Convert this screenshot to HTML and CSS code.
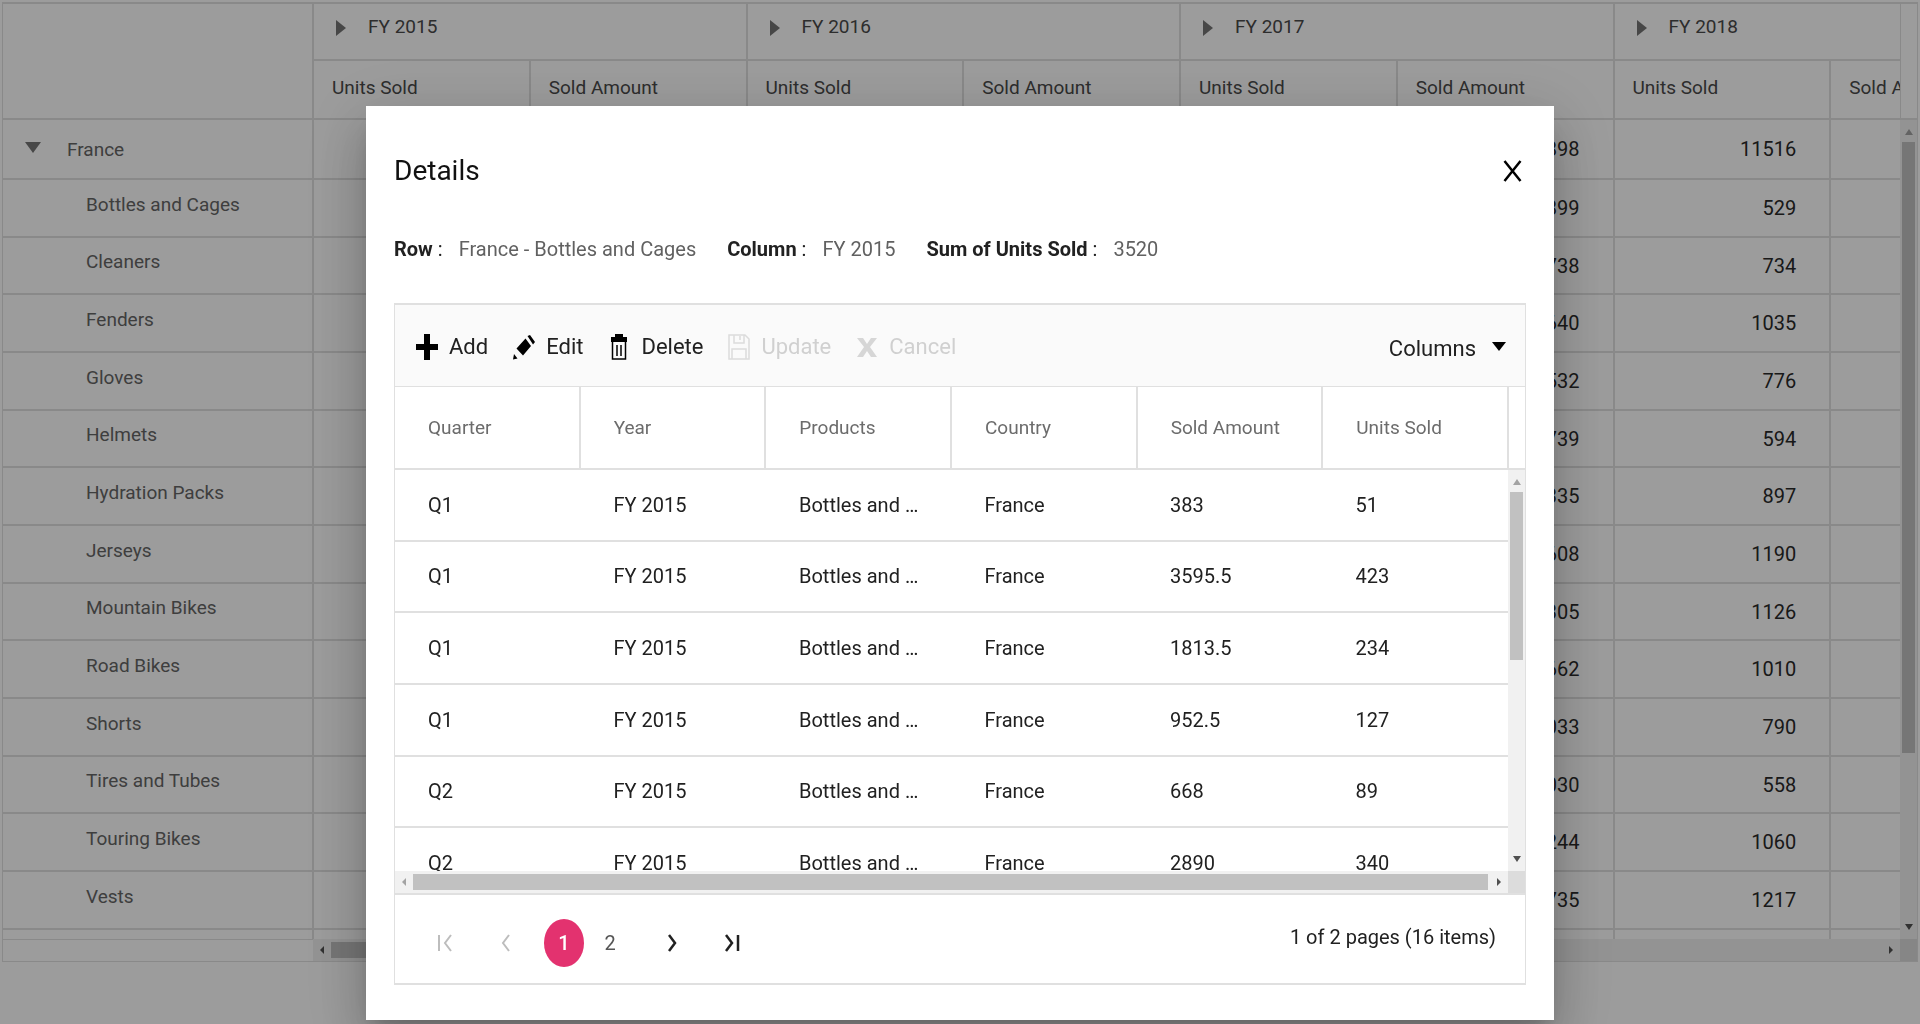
FILE: index.html
```
<!DOCTYPE html>
<html lang="en">
<head>
<meta charset="utf-8">
<title>Details</title>
<link rel="stylesheet" href="styles.css">
</head>
<body>
<main class="pivot">
  <div class="pivot-view">
    <table class="pivot-table">
      <colgroup><col class="col-label"><col><col><col><col><col><col><col><col></colgroup>
      <thead>
        <tr class="years">
          <td rowspan="2"></td>
          <th colspan="2"><span class="caret-right"></span>FY 2015</th>
          <th colspan="2"><span class="caret-right"></span>FY 2016</th>
          <th colspan="2"><span class="caret-right"></span>FY 2017</th>
          <th colspan="2"><span class="caret-right"></span>FY 2018</th>
        </tr>
        <tr class="measures">
          <th>Units Sold</th><th>Sold Amount</th><th>Units Sold</th><th>Sold Amount</th><th>Units Sold</th><th>Sold Amount</th><th>Units Sold</th><th>Sold Amount</th>
        </tr>
      </thead>
      <tbody>
        <tr class="parent"><th><span class="caret-down"></span>France</th><td></td><td></td><td></td><td></td><td></td><td>898</td><td>11516</td><td></td></tr>
        <tr><th>Bottles and Cages</th><td></td><td></td><td></td><td></td><td></td><td>899</td><td>529</td><td></td></tr>
        <tr><th>Cleaners</th><td></td><td></td><td></td><td></td><td></td><td>738</td><td>734</td><td></td></tr>
        <tr><th>Fenders</th><td></td><td></td><td></td><td></td><td></td><td>640</td><td>1035</td><td></td></tr>
        <tr><th>Gloves</th><td></td><td></td><td></td><td></td><td></td><td>532</td><td>776</td><td></td></tr>
        <tr><th>Helmets</th><td></td><td></td><td></td><td></td><td></td><td>739</td><td>594</td><td></td></tr>
        <tr><th>Hydration Packs</th><td></td><td></td><td></td><td></td><td></td><td>335</td><td>897</td><td></td></tr>
        <tr><th>Jerseys</th><td></td><td></td><td></td><td></td><td></td><td>608</td><td>1190</td><td></td></tr>
        <tr><th>Mountain Bikes</th><td></td><td></td><td></td><td></td><td></td><td>305</td><td>1126</td><td></td></tr>
        <tr><th>Road Bikes</th><td></td><td></td><td></td><td></td><td></td><td>662</td><td>1010</td><td></td></tr>
        <tr><th>Shorts</th><td></td><td></td><td></td><td></td><td></td><td>033</td><td>790</td><td></td></tr>
        <tr><th>Tires and Tubes</th><td></td><td></td><td></td><td></td><td></td><td>030</td><td>558</td><td></td></tr>
        <tr><th>Touring Bikes</th><td></td><td></td><td></td><td></td><td></td><td>244</td><td>1060</td><td></td></tr>
        <tr><th>Vests</th><td></td><td></td><td></td><td></td><td></td><td>735</td><td>1217</td><td></td></tr>
        <tr class="cut"><th></th><td></td><td></td><td></td><td></td><td></td><td></td><td></td><td></td></tr>
      </tbody>
    </table>
  </div>
  <div class="pivot-side">
    <div class="side-head"></div>
    <div class="vbar">
      <svg class="arrow faint" viewBox="0 0 8 8"><path d="M0 7L4 1L8 7Z"/></svg>
      <div class="thumb pivot-vthumb"></div>
      <svg class="arrow end" viewBox="0 0 8 8"><path d="M0 1L4 7L8 1Z"/></svg>
    </div>
  </div>
  <div class="pivot-foot">
    <div class="foot-label"></div>
    <div class="hbar">
      <svg class="arrow" viewBox="0 0 8 8"><path d="M6 0L2 4L6 8Z"/></svg>
      <div class="thumb pivot-hthumb"></div>
      <svg class="arrow end" viewBox="0 0 8 8"><path d="M2 0L6 4L2 8Z"/></svg>
    </div>
  </div>
  <div class="corner"></div>
</main>

<div class="overlay">
  <section class="dialog" role="dialog" aria-labelledby="dialog-title">
    <header class="dialog-head">
      <h1 id="dialog-title">Details</h1>
      <button class="close" type="button" aria-label="Close"><svg viewBox="0 0 18 22"><path d="M1 1L17 21M17 1L1 21"/></svg></button>
    </header>
    <dl class="facts">
      <div><dt>Row</dt><dd>France - Bottles and Cages</dd></div>
      <div><dt>Column</dt><dd>FY 2015</dd></div>
      <div><dt>Sum of Units Sold</dt><dd>3520</dd></div>
    </dl>
    <div class="grid">
      <div class="toolbar">
        <button type="button"><svg viewBox="0 0 22 26"><path d="M8 0h6v10h8v6h-8v10H8V16H0v-6h8Z"/></svg>Add</button>
        <button type="button"><svg viewBox="0 0 22 26"><path d="M12.500 4.500L18 12L10 21.500L3.500 14.500ZM14.500 2L17 1L22 8L20 10.500ZM1 20L4.500 24.500L0 25.500Z"/></svg>Edit</button>
        <button type="button"><svg viewBox="0 0 22 26"><path d="M3 3h4V0h8v3h4v5H3Z"/><path class="line" d="M4.500 8v17h13V8M9 11v11M13 11v11"/></svg>Delete</button>
        <button type="button" disabled><svg viewBox="0 0 22 26"><path class="line" d="M1 1h16l4 4v20H1ZM6 1v8h10V1M12 2v4M4 25v-10h14v10"/></svg>Update</button>
        <button type="button" disabled><svg viewBox="0 0 22 26"><path d="M1 4h6l4 6l4-6h6l-7 9l7 10h-6l-4-6l-4 6H1l7-10Z"/></svg>Cancel</button>
        <button class="columns" type="button">Columns<span class="caret-menu"></span></button>
      </div>
      <div class="grid-head">
        <table>
          <thead><tr><th>Quarter</th><th>Year</th><th>Products</th><th>Country</th><th>Sold Amount</th><th>Units Sold</th></tr></thead>
        </table>
      </div>
      <div class="grid-body">
        <div class="rows">
          <table>
            <tbody>
              <tr><td>Q1</td><td>FY 2015</td><td>Bottles and Cages</td><td>France</td><td>383</td><td>51</td></tr>
              <tr><td>Q1</td><td>FY 2015</td><td>Bottles and Cages</td><td>France</td><td>3595.5</td><td>423</td></tr>
              <tr><td>Q1</td><td>FY 2015</td><td>Bottles and Cages</td><td>France</td><td>1813.5</td><td>234</td></tr>
              <tr><td>Q1</td><td>FY 2015</td><td>Bottles and Cages</td><td>France</td><td>952.5</td><td>127</td></tr>
              <tr><td>Q2</td><td>FY 2015</td><td>Bottles and Cages</td><td>France</td><td>668</td><td>89</td></tr>
              <tr><td>Q2</td><td>FY 2015</td><td>Bottles and Cages</td><td>France</td><td>2890</td><td>340</td></tr>
            </tbody>
          </table>
        </div>
        <div class="vbar">
          <svg class="arrow faint" viewBox="0 0 8 8"><path d="M0 7L4 1L8 7Z"/></svg>
          <div class="thumb grid-vthumb"></div>
          <svg class="arrow end" viewBox="0 0 8 8"><path d="M0 1L4 7L8 1Z"/></svg>
        </div>
        <div class="hbar">
          <svg class="arrow faint" viewBox="0 0 8 8"><path d="M6 0L2 4L6 8Z"/></svg>
          <div class="thumb grid-hthumb"></div>
          <svg class="arrow end" viewBox="0 0 8 8"><path d="M2 0L6 4L2 8Z"/></svg>
        </div>
        <div class="corner"></div>
      </div>
      <nav class="pager" aria-label="Pages">
        <button type="button" disabled aria-label="First page"><svg viewBox="0 0 16 18"><path d="M2 1v16M14 1L8 9L14 17"/></svg></button>
        <button type="button" disabled aria-label="Previous page"><svg viewBox="0 0 16 18"><path d="M12 1L6 9L12 17"/></svg></button>
        <a class="page current" href="#1">1</a>
        <a class="page" href="#2">2</a>
        <button class="next" type="button" aria-label="Next page"><svg viewBox="0 0 16 18"><path d="M5 1L11 9L5 17"/></svg></button>
        <button type="button" aria-label="Last page"><svg viewBox="0 0 16 18"><path d="M2 1L8 9L2 17M14 1v16"/></svg></button>
        <span class="total">1 of 2 pages (16 items)</span>
      </nav>
    </div>
  </section>
</div>
</body>
</html>
```
FILE: styles.css
```
* { box-sizing: border-box; }
body {
  margin: 0;
  font-family: Roboto, "Liberation Sans", sans-serif;
  font-size: 20px;
  color: #212121;
  background: #fff;
}
button { font: inherit; color: inherit; background: none; border: 0; padding: 0; }
table { border-collapse: separate; border-spacing: 0; table-layout: fixed; }
th { font-weight: 400; font-size: 19px; text-align: left; }

/* Pivot table behind the dialog */
.pivot {
  display: grid;
  grid-template-columns: minmax(0, 1fr) 17px;
  margin: 2px 2px 0;
  border: 1px solid #e0e0e0;
  border-top-width: 2px;
}
.pivot-view { overflow: hidden; height: 935px; }
.pivot-table { width: 2045px; }
.col-label { width: 311px; }
.pivot-table th, .pivot-table td {
  padding: 0;
  border-right: 2px solid #e0e0e0;
  border-bottom: 2px solid #e0e0e0;
}
.pivot-table thead { color: #4a4a4a; }
.pivot-table thead th { padding-left: 18px; }
.years th { height: 57px; padding-bottom: 10px; }
.measures th { height: 59px; padding-bottom: 4px; }
.pivot-table tbody { color: #2a2a2a; }
.pivot-table tbody td { text-align: right; padding-right: 33px; height: 58px; }
.pivot-table tbody th { color: #666; padding: 0 0 8px 83px; }
.pivot-table .parent th { padding: 0; }
.pivot-table .parent td { height: 60px; }
.pivot-table tbody tr:nth-child(3n) td { height: 57px; }
.pivot-table tbody .cut td { height: 10px; }
.caret-right {
  display: inline-block;
  margin: 0 22px 0 4px;
  border-left: 10px solid #757575;
  border-top: 8px solid transparent;
  border-bottom: 8px solid transparent;
  vertical-align: middle;
}
.caret-down {
  display: inline-block;
  margin: 0 26px 6px 22px;
  border-top: 11px solid #757575;
  border-left: 8px solid transparent;
  border-right: 8px solid transparent;
  vertical-align: middle;
}
.pivot-side { display: flex; flex-direction: column; }
.side-head { height: 116px; border-left: 1px solid #e0e0e0; border-bottom: 2px solid #e0e0e0; }
.pivot-side .vbar { flex: 1; }
.pivot-foot { display: grid; grid-template-columns: 310px 1fr; }
.foot-label { border-top: 1px solid #e0e0e0; }

/* Scroll bars */
.vbar, .hbar { display: flex; align-items: center; background: #f1f1f1; }
.vbar { flex-direction: column; padding: 8px 0; }
.hbar { height: 22px; padding: 0 5px; }
.thumb { background: #c1c1c1; }
.vbar .thumb { width: 13px; margin-top: 6px; }
.hbar .thumb { height: 16px; margin-left: 5px; }
.arrow { width: 8px; height: 8px; fill: #505050; }
.arrow.faint { fill: #a3a3a3; }
.vbar .end { margin-top: auto; }
.hbar .end { margin-left: auto; }
.corner { background: #dcdcdc; }
.pivot-vthumb { height: 611px; }
.pivot-hthumb { width: 60%; }
.grid-vthumb { height: 168px; }
.grid-hthumb { width: 1075px; }

/* Dialog */
.overlay {
  position: fixed;
  inset: 0;
  padding-top: 106px;
  overflow: hidden;
  background: rgba(0, 0, 0, 0.39);
}
.dialog {
  max-width: 1188px;
  margin: 0 auto;
  padding: 42px 28px 35px;
  background: #fff;
  box-shadow: 0 14px 20px -8px rgba(0, 0, 0, 0.2), 0 32px 48px 4px rgba(0, 0, 0, 0.14), 0 12px 60px 10px rgba(0, 0, 0, 0.12);
}
.dialog-head { display: flex; justify-content: space-between; align-items: center; height: 44px; padding-right: 4px; }
.dialog-head h1 { margin: 0; font-size: 28px; font-weight: 400; color: #111; }
.close { display: flex; padding-top: 2px; }
.close svg { width: 19px; height: 22px; fill: none; stroke: #000; stroke-width: 2.500; }
.facts { display: flex; gap: 31px; margin: 0; height: 111px; align-items: center; padding-top: 2px; }
.facts div { display: flex; }
.facts dt { font-weight: 700; }
.facts dt::after { content: ":"; font-weight: 400; padding-left: 5px; }
.facts dd { margin: 0 0 0 16px; color: #616161; }
.grid { border: 1px solid #e0e0e0; border-top-width: 2px; border-bottom-width: 2px; }
.toolbar {
  display: flex;
  align-items: center;
  gap: 25px;
  height: 82px;
  padding: 2px 19px 0 21px;
  background: #fafafa;
  border-bottom: 1px solid #e0e0e0;
  font-size: 22px;
}
.toolbar button { display: flex; align-items: center; gap: 11px; }
.toolbar svg { width: 22px; height: 26px; fill: #000; }
.toolbar button:disabled { color: #d0d0d0; }
.toolbar button:disabled svg { fill: #d6d6d6; }
.toolbar .line { fill: none; stroke: #000; stroke-width: 1.500; }
.toolbar button:disabled .line { stroke: #dcdcdc; }
.toolbar .columns { margin-left: auto; gap: 16px; padding-top: 4px; }
.caret-menu {
  border-top: 9px solid #000;
  border-left: 7px solid transparent;
  border-right: 7px solid transparent;
  margin-bottom: 4px;
}
.grid table { width: 100%; }
.grid-head { padding-right: 16px; border-bottom: 2px solid #e0e0e0; }
.grid-head th { height: 81px; padding: 0 0 0 33px; color: #6c6c6c; border-right: 2px solid #e0e0e0; }
.grid-body {
  display: grid;
  grid-template-columns: minmax(0, 1fr) 17px;
  border-bottom: 2px solid #e0e0e0;
}
.rows { height: 401px; overflow: hidden; }
.rows table { height: 430px; }
.rows td {
  padding: 0 32px 0 33px;
  border-bottom: 2px solid #e0e0e0;
  overflow: hidden;
  white-space: nowrap;
  text-overflow: ellipsis;
}
.pager { display: flex; align-items: center; height: 88px; padding: 7px 29px 0 20px; }
.pager button { display: flex; justify-content: center; width: 60px; }
.pager .next { margin-left: 12px; }
.pager svg { width: 16px; height: 18px; fill: none; stroke: #212121; stroke-width: 2.500; }
.pager button:disabled svg { stroke: #bdbdbd; stroke-width: 2; }
.page { width: 40px; line-height: 48px; margin-left: 6px; text-align: center; color: #555; text-decoration: none; }
.page.current { margin-left: 9px; border-radius: 50%; background: #e3326f; color: #fff; font-weight: 500; }
.total { margin-left: auto; padding-bottom: 12px; }
```
